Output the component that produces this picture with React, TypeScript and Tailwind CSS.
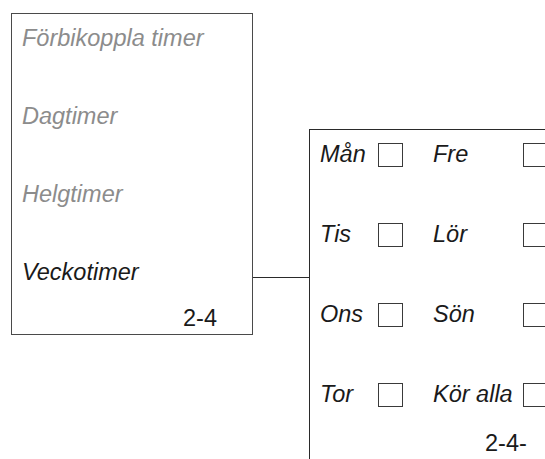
import React from "react";

const font = { fontFamily: '"Liberation Sans", Arial, sans-serif' };

function Box() {
  return <div className="w-[25px] h-[24px] border border-[#3a3a3a] bg-white" />;
}

const rows: [string, string][] = [
  ["Mån", "Fre"],
  ["Tis", "Lör"],
  ["Ons", "Sön"],
  ["Tor", "Kör alla"],
];

export default function App() {
  return (
    <div
      className="relative w-[545px] h-[459px] overflow-hidden bg-white text-[23.5px] leading-[26px]"
      style={font}
    >
      <div className="flex items-start">
        {/* Left menu box */}
        <div className="ml-[11px] mt-[13px] w-[242px] h-[322px] shrink-0 border border-[#4a4a4a] pl-[10px] pt-[11px] flex flex-col">
          <div className="italic text-[#8c8c8c]">Förbikoppla timer</div>
          <div className="italic text-[#8c8c8c] mt-[52px]">Dagtimer</div>
          <div className="italic text-[#8c8c8c] mt-[52px]">Helgtimer</div>
          <div className="italic text-[#1a1a1a] mt-[52px]">Veckotimer</div>
          <div className="text-[#1a1a1a] mt-[20px] ml-[161px]">2-4</div>
        </div>

        {/* Connector */}
        <div className="mt-[277px] w-[56px] h-px bg-[#2a2a2a] shrink-0" />

        {/* Right day box */}
        <div className="mt-[129px] w-[260px] h-[340px] shrink-0 border border-[#2a2a2a] pl-[10px] pt-[10px] flex flex-col">
          {rows.map(([a, b], i) => (
            <div
              key={a}
              className={`grid grid-cols-[58px_55px_90px_25px] items-center h-[26px] ${i > 0 ? "mt-[54px]" : ""}`}
            >
              <span className="italic text-[#1a1a1a]">{a}</span>
              <div className="mt-[3px]"><Box /></div>
              <span className="italic text-[#1a1a1a]">{b}</span>
              <div className="mt-[3px]"><Box /></div>
            </div>
          ))}
          <div className="text-[#1a1a1a] mt-[24px] ml-[165px]">2-4-</div>
        </div>
      </div>
    </div>
  );
}
